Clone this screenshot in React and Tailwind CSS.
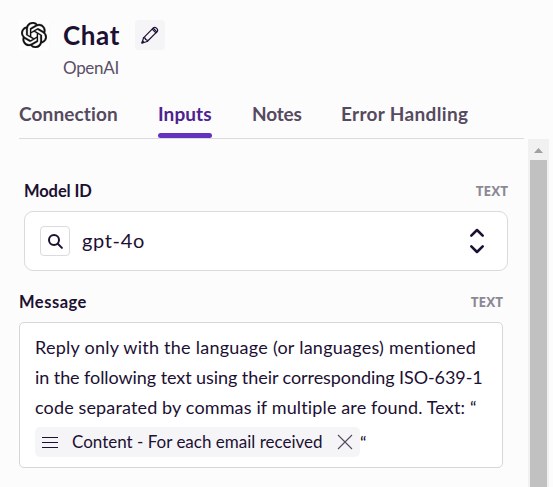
import React from "react";
import { SiOpenai } from "react-icons/si";

const tabs = [
  { label: "Connection", box: "w-[99px] mr-[40px]", track: "tracking-[0.13px]" },
  { label: "Inputs", box: "w-[54px] mr-[40px]", track: "tracking-[0.1px]", active: true },
  { label: "Notes", box: "w-[49px] mr-[40px]", track: "tracking-[-0.2px]" },
  { label: "Error Handling", box: "w-[128px]", track: "tracking-[0.33px]" },
];

function FieldHeader({ label, className, track }) {
  return (
    <div className={`flex h-5 items-center justify-between whitespace-nowrap ${className}`}>
      <span className={`text-[16.5px] leading-5 font-bold ${track}`}>{label}</span>
      <span className="font-['Open_Sans',sans-serif] text-[13.5px] leading-5 font-bold text-[#8c8896]">TEXT</span>
    </div>
  );
}

function PencilIcon() {
  return (
    <svg width="18" height="18" viewBox="0 0 18 18" fill="none" stroke="#1c1033" strokeWidth="1.2" strokeLinejoin="round" strokeLinecap="round">
      <path d="M1 17l1.5-5.2L12.4 1.9a1.9 1.9 0 0 1 2.7 0l1 1a1.9 1.9 0 0 1 0 2.7L6.2 15.5z" />
      <path d="M2.5 11.8l1.7.4.4 1.3 1.3.4.3 1.6M11.2 3.1l3.7 3.7M12.2 2.1l3.7 3.7" />
      <path d="M1 17l.6-2 1.4 1.4z" fill="#1c1033" />
    </svg>
  );
}

function Scrollbar() {
  return (
    <div className="flex w-[21px] shrink-0 flex-col items-center bg-[#f1f1f1]">
      <div className="flex h-[21px] shrink-0 items-center justify-center pt-[2px]">
        <svg width="9" height="5" viewBox="0 0 9 5" fill="#a0a0a0">
          <path d="M0 5L4.5 0L9 5z" />
        </svg>
      </div>
      <div className="w-[17px] flex-1 bg-[#c1c1c1]" />
    </div>
  );
}

export default function App() {
  return (
    <div className="flex h-[487px] w-[553px] flex-col overflow-hidden bg-[#fcfcfc] font-['Lato',sans-serif] text-[#1c1033]">
      <header className="flex h-[90px] shrink-0 pt-5 pl-[19px]">
        <div className="mr-[14px] flex h-[30px] w-[30px] items-center justify-center bg-white">
          <SiOpenai size={26} color="#111111" stroke="#111111" strokeWidth={0.25} />
        </div>
        <div className="flex flex-col">
          <div className="flex h-[30px] items-center">
            <h1 className="w-[72px] text-[26px] leading-[30px] font-bold tracking-[0.6px] whitespace-nowrap">Chat</h1>
            <button className="flex h-[30px] w-[30px] items-center justify-center rounded-[4px] bg-[#f5f5f8]">
              <PencilIcon />
            </button>
          </div>
          <p className="mt-[8px] text-[17px] leading-5 tracking-[-0.3px] text-[#5a4f66]">OpenAI</p>
        </div>
      </header>

      <nav className="ml-[19px] flex h-[49px] w-[505px] shrink-0 border-b border-[#dadae0]">
        {tabs.map((tab) => (
          <div key={tab.label} className={`flex flex-col justify-between pt-[12px] ${tab.box}`}>
            <span className={`text-[19px] leading-6 font-bold whitespace-nowrap ${tab.track} ${tab.active ? "text-[#4d2291]" : "text-[#554a60]"}`}>
              {tab.label}
            </span>
            {tab.active && <span className="h-[5px] rounded-full bg-[#6333bd]" />}
          </div>
        ))}
      </nav>

      <div className="flex min-h-0 flex-1">
        <main className="w-[528px] shrink-0 pl-[19px]">
          <section className="ml-[5px] w-[484px] pt-[42px]">
            <FieldHeader label="Model ID" track="tracking-[-0.1px]" />
            <div className="mt-[10px] flex h-[60px] items-center rounded-[9px] border border-[#dadadf] bg-white pl-[15px]">
              <span className="flex h-[30px] w-[30px] items-center justify-center rounded-[4px] border border-[#dadadf]">
                <svg width="15" height="15" viewBox="0 0 15 15" fill="none" stroke="#1c1033" strokeWidth="2" strokeLinecap="round">
                  <circle cx="6" cy="6" r="5" />
                  <path d="M9.8 9.8l4.1 4.1" />
                </svg>
              </span>
              <span className="ml-3 pb-[2px] text-[20px] tracking-[0.65px]">gpt-4o</span>
              <svg className="mr-[22px] ml-auto" width="16" height="26" viewBox="0 0 16 26" fill="none" stroke="#1c1033" strokeWidth="2.6" strokeLinecap="round" strokeLinejoin="round">
                <path d="M2.3 7.6L8 2L13.7 7.6M2.3 18.4L8 24L13.7 18.4" />
              </svg>
            </div>
          </section>

          <section className="w-[484px]">
            <FieldHeader label="Message" className="mt-[21px]" track="tracking-[0.5px]" />
            <div className="mt-[10px] h-[146px] rounded-[5px] border border-[#d5d5da] bg-white pt-[9px] pl-[15px] text-[18px] leading-[30px] whitespace-nowrap">
              <p className="tracking-[0.25px]">Reply only with the language (or languages) mentioned</p>
              <p className="tracking-[-0.07px]">in the following text using their corresponding ISO-639-1</p>
              <p className="tracking-[0.14px]">code separated by commas if multiple are found. Text: “</p>
              <div className="mt-[5px] flex">
                <span className="flex h-[30px] w-[325px] items-center rounded-[5px] bg-[#f5f5f8]">
                  <svg className="ml-[7px]" width="16" height="12" viewBox="0 0 16 12" stroke="#1c1033">
                    <path d="M0 1.5H16M0 6.5H16M0 11.5H16" />
                  </svg>
                  <span className="ml-[14px] w-[251px] text-[17px]">Content - For each email received</span>
                  <svg className="ml-[14px]" width="16" height="16" viewBox="0 0 16 16" stroke="#51495f" strokeWidth="1.1">
                    <path d="M1 1l14 14M15 1L1 15" />
                  </svg>
                </span>
                <span>“</span>
              </div>
            </div>
          </section>
        </main>
        <Scrollbar />
      </div>
    </div>
  );
}
